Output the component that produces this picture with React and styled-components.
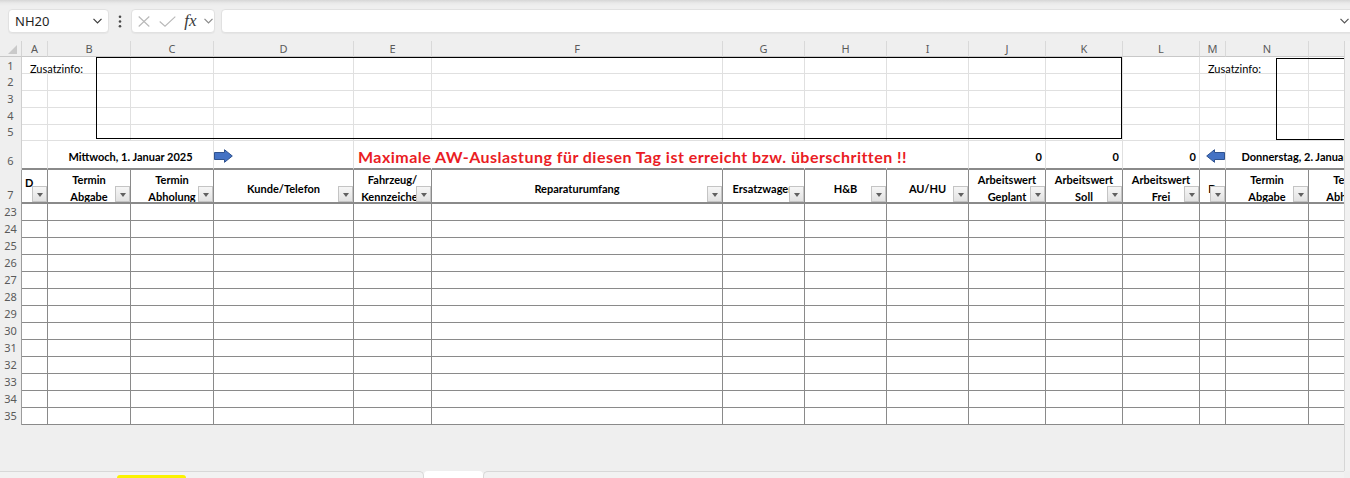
import React from 'react';
import styled, { createGlobalStyle } from 'styled-components';

const CELL_FONT = 'Lato, "Liberation Sans", Arial, sans-serif';
const UI_FONT = '"Noto Sans", "Open Sans", "Liberation Sans", sans-serif';
const GRID_LINE = '#e0e0e0';
const CELL_LINE = '#8a8a8a';

const COLUMNS = [
  ['A', 26], ['B', 83], ['C', 83], ['D', 140], ['E', 78], ['F', 291], ['G', 82],
  ['H', 82], ['I', 82], ['J', 77], ['K', 77], ['L', 77], ['M', 26], ['N', 83], ['O', 83],
];

const HEADINGS = {
  A: { lines: ['D', ''], left: true },
  B: { lines: ['Termin', 'Abgabe'] },
  C: { lines: ['Termin', 'Abholung'] },
  D: { lines: ['Kunde/Telefon'] },
  E: { lines: ['Fahrzeug/', 'Kennzeichen'] },
  F: { lines: ['Reparaturumfang'] },
  G: { lines: ['Ersatzwagen'] },
  H: { lines: ['H&B'] },
  I: { lines: ['AU/HU'] },
  J: { lines: ['Arbeitswert', 'Geplant'] },
  K: { lines: ['Arbeitswert', 'Soll'] },
  L: { lines: ['Arbeitswert', 'Frei'] },
  M: { lines: ['D'] },
  N: { lines: ['Termin', 'Abgabe'] },
  O: { lines: ['Termin', 'Abholung'] },
};

const INFO_ROWS = [1, 2, 3, 4, 5];
const DATA_ROWS = Array.from({ length: 13 }, (_, i) => 23 + i);

const GlobalStyle = createGlobalStyle`
  html, body { margin: 0; padding: 0; }
  body { background: #efefef; overflow: hidden; }
`;

const Window = styled.div`
  width: 1350px;
  height: 478px;
  display: flex;
  flex-direction: column;
  background: #efefef;
  overflow: hidden;
`;

const RibbonShade = styled.div`
  height: 9px;
  flex-shrink: 0;
  background: linear-gradient(#d6d6d6, #e9e9e9 3px, #efefef 6px);
`;

const FormulaBar = styled.div`
  display: flex;
  align-items: center;
  height: 24px;
  padding-left: 8px;
  flex-shrink: 0;
`;

const Field = styled.div`
  box-sizing: border-box;
  height: 24px;
  flex-shrink: 0;
  display: flex;
  align-items: center;
  background: #fff;
  border: 1px solid #e1e1e1;
  border-radius: 4px;
  box-shadow: 0 1px 1px rgba(0, 0, 0, 0.04);
`;

const NameBox = styled(Field)`
  width: 101px;
  justify-content: space-between;
  padding: 0 6px 0 6px;
  font: 13px ${UI_FONT};
  color: #1f1f1f;
`;

const Kebab = styled.div`
  width: 22px;
  display: flex;
  justify-content: center;
  flex-shrink: 0;
`;

const FxGroup = styled(Field)`
  width: 84px;
`;

const IconSlot = styled.span`
  width: ${p => p.$w}px;
  height: 100%;
  display: flex;
  align-items: center;
  justify-content: center;
`;

const FxLabel = styled.span`
  font: italic 17px "Liberation Serif", "DejaVu Serif", serif;
  color: #3a3a3a;
  line-height: 1;
  margin-top: -2px;
`;

const FormulaInput = styled(Field)`
  width: 1137px;
  margin-left: 6px;
  justify-content: flex-end;
  padding-right: 8px;
`;

const Workspace = styled.div`
  display: flex;
  margin-top: 8px;
  flex: 1;
  min-height: 0;
`;

const SheetColumn = styled.div`
  width: 1344px;
  flex-shrink: 0;
  display: flex;
  flex-direction: column;
`;

const GridWrap = styled.div`
  position: relative;
  width: 1344px;
  overflow: hidden;
  background: #fff;
  flex-shrink: 0;
`;

const Grid = styled.div`
  display: grid;
  width: max-content;
  grid-template-columns: 22px ${COLUMNS.map(([, w]) => `${w}px`).join(' ')};
  grid-template-rows: 16px 17px 17px 17px 17px 16px 29px 34px repeat(13, 17px);
`;

const Corner = styled.div`
  box-sizing: border-box;
  background: #efefef;
  border-right: 1px solid #d4d4d4;
  border-bottom: 1px solid #c8c8c8;
  display: flex;
  align-items: flex-end;
  justify-content: flex-end;
  padding: 0 4px 2px 0;
`;

const ColHead = styled.div`
  box-sizing: border-box;
  background: #efefef;
  border-right: 1px solid #d9d9d9;
  border-bottom: 1px solid #c8c8c8;
  display: flex;
  align-items: center;
  justify-content: center;
  font: 11px ${UI_FONT};
  line-height: 15px;
  color: #5a5a5a;
`;

const RowHead = styled.div`
  box-sizing: border-box;
  background: #efefef;
  border-right: 1px solid ${p => (p.$strong ? '#9c9c9c' : '#cfcfcf')};
  display: flex;
  align-items: flex-end;
  justify-content: center;
  padding-bottom: ${p => (p.$low ? 0 : 1)}px;
  font: 11px ${UI_FONT};
  line-height: 16px;
  color: #5a5a5a;
`;

const CellBase = styled.div`
  box-sizing: border-box;
  min-width: 0;
  display: flex;
  white-space: nowrap;
  font-family: ${CELL_FONT};
  color: #000;
`;

const InfoCell = styled(CellBase)`
  border-right: 1px solid ${p => (p.$open ? 'transparent' : GRID_LINE)};
  border-bottom: 1px solid ${GRID_LINE};
  align-items: flex-end;
  padding: 0 2px;
  font-size: 11px;
  line-height: 8px;
`;

const NoteLabel = styled.span`
  padding-left: 6px;
`;

const DayCell = styled(CellBase)`
  grid-column: span ${p => p.$span || 1};
  border-right: 1px solid ${p => (p.$open ? 'transparent' : GRID_LINE)};
  border-bottom: 2px solid ${CELL_LINE};
  align-items: center;
  justify-content: ${p =>
    p.$align === 'center' ? 'center' : p.$align === 'right' ? 'flex-end' : 'flex-start'};
  padding: 3px 3px 0;
  font-size: 11px;
  font-weight: 700;
`;

const ArrowSlot = styled(DayCell)`
  padding: 3px 0 0;
`;

const Alert = styled.span`
  font-size: 16px;
  font-weight: 700;
  letter-spacing: 0.46px;
  color: #ea1c24;
  padding-left: 1px;
`;

const HeadCell = styled(CellBase)`
  position: relative;
  flex-direction: column;
  justify-content: center;
  align-items: ${p => (p.$left ? 'flex-start' : 'center')};
  border-right: 1px solid ${CELL_LINE};
  border-bottom: 2px solid ${CELL_LINE};
  padding: 4px ${p => (p.$left ? '3px' : '0')} 0;
  font-size: 11px;
  font-weight: 700;
  line-height: 17px;
  overflow: hidden;
`;

const HeadLine = styled.span`
  display: block;
  height: 17px;
`;

const FilterButton = styled.span`
  position: absolute;
  right: 0;
  bottom: 0;
  width: 15px;
  height: 16px;
  box-sizing: border-box;
  background: linear-gradient(#f6f6f6, #e2e2e2);
  border: 1px solid #c4c4c4;
  display: flex;
  align-items: center;
  justify-content: center;

  &::after {
    content: '';
    margin-top: 2px;
    border-left: 3.5px solid transparent;
    border-right: 3.5px solid transparent;
    border-top: 4px solid #606060;
  }
`;

const EntryCell = styled(CellBase)`
  border-right: 1px solid ${CELL_LINE};
  border-bottom: 1px solid ${CELL_LINE};
`;

/* Free-floating note frames drawn on top of the sheet */
const TextFrame = styled.div`
  position: absolute;
  left: ${p => p.$x}px;
  top: ${p => p.$y}px;
  width: ${p => p.$w}px;
  height: ${p => p.$h}px;
  box-sizing: border-box;
  border: 1px solid #000;
  pointer-events: none;
`;

const Filler = styled.div`
  flex: 1;
`;

const SheetTabs = styled.div`
  display: flex;
  height: 7px;
  flex-shrink: 0;
`;

const TabRail = styled.div`
  box-sizing: border-box;
  width: ${p => (p.$w ? `${p.$w}px` : 'auto')};
  flex: ${p => (p.$w ? 'none' : 1)};
  border-top: 1px solid #d8d8d8;
  border-${p => (p.$side === 'left' ? 'right' : 'left')}: 1px solid #d8d8d8;
  border-top-${p => (p.$side === 'left' ? 'right' : 'left')}-radius: 5px;
  background: #f2f2f2;
`;

const ColouredTab = styled.div`
  margin: 3px 0 0 117px;
  width: 69px;
  height: 4px;
  border-radius: 3px 3px 0 0;
  background: #fbf200;
`;

const ActiveTab = styled.div`
  width: 59px;
  background: #fff;
  border-radius: 4px 4px 0 0;
`;

const ScrollEdge = styled.div`
  flex: 1;
  height: 430px;
  border-left: 1px solid #d6d6d6;
  background: #f1f1f1;
`;

const Chevron = ({ color = '#555', w = 9 }) => (
  <svg width={w} height="6" viewBox="0 0 9 6">
    <path d="M0.5 0.8L4.5 4.8L8.5 0.8" fill="none" stroke={color} strokeWidth="1.2" />
  </svg>
);

const BlockArrow = ({ flip }) => (
  <svg width="19" height="14" viewBox="0 0 19 14" style={flip ? { transform: 'scaleX(-1)' } : undefined}>
    <path
      d="M0.5 3.5H10.5V0.7L18.3 7L10.5 13.3V10.5H0.5Z"
      fill="#4472c4"
      stroke="#2f528f"
      strokeWidth="1"
    />
  </svg>
);

function InfoRow({ row }) {
  return (
    <>
      <RowHead $low={row === 1}>{row}</RowHead>
      {COLUMNS.map(([id]) => {
        const labelled = row === 1 && (id === 'A' || id === 'M');
        return (
          <InfoCell key={id} $open={labelled}>
            {labelled && <NoteLabel>Zusatzinfo:</NoteLabel>}
          </InfoCell>
        );
      })}
    </>
  );
}

function DayRow() {
  return (
    <>
      <RowHead>6</RowHead>
      <DayCell />
      <DayCell $span={2} $align="center">Mittwoch, 1. Januar 2025</DayCell>
      <ArrowSlot><BlockArrow /></ArrowSlot>
      <DayCell $open>
        <Alert>Maximale AW-Auslastung für diesen Tag ist erreicht bzw. überschritten !!</Alert>
      </DayCell>
      <DayCell $open />
      <DayCell $open />
      <DayCell $open />
      <DayCell />
      <DayCell $align="right">0</DayCell>
      <DayCell $align="right">0</DayCell>
      <DayCell $align="right">0</DayCell>
      <ArrowSlot $align="right"><BlockArrow flip /></ArrowSlot>
      <DayCell $span={2} $align="center">Donnerstag, 2. Januar 2025</DayCell>
    </>
  );
}

function HeadingRow() {
  return (
    <>
      <RowHead $strong>7</RowHead>
      {COLUMNS.map(([id]) => {
        const h = HEADINGS[id];
        return (
          <HeadCell key={id} $left={h.left}>
            {h.lines.map((line, i) => (
              <HeadLine key={i}>{line}</HeadLine>
            ))}
            <FilterButton />
          </HeadCell>
        );
      })}
    </>
  );
}

function EntryRow({ row }) {
  return (
    <>
      <RowHead $strong>{row}</RowHead>
      {COLUMNS.map(([id]) => (
        <EntryCell key={id} />
      ))}
    </>
  );
}

export default function App() {
  return (
    <>
      <GlobalStyle />
      <Window>
        <RibbonShade />
        <FormulaBar>
          <NameBox>
            <span>NH20</span>
            <Chevron color="#3c3c3c" />
          </NameBox>
          <Kebab>
            <svg width="4" height="13" viewBox="0 0 4 13">
              <circle cx="2" cy="1.7" r="1.3" fill="#4a4a4a" />
              <circle cx="2" cy="6.5" r="1.3" fill="#4a4a4a" />
              <circle cx="2" cy="11.3" r="1.3" fill="#4a4a4a" />
            </svg>
          </Kebab>
          <FxGroup>
            <IconSlot $w={23}>
              <svg width="12" height="11" viewBox="0 0 12 11">
                <path d="M0.7 0.5L11.3 10.5M11.3 0.5L0.7 10.5" stroke="#b8b8b8" strokeWidth="1.1" />
              </svg>
            </IconSlot>
            <IconSlot $w={24}>
              <svg width="17" height="11" viewBox="0 0 17 11">
                <path d="M0.7 5.5L6 10.2L16.3 0.6" fill="none" stroke="#b8b8b8" strokeWidth="1.1" />
              </svg>
            </IconSlot>
            <IconSlot $w={23}>
              <FxLabel>fx</FxLabel>
            </IconSlot>
            <IconSlot $w={12}>
              <Chevron color="#8a8a8a" />
            </IconSlot>
          </FxGroup>
          <FormulaInput>
            <Chevron color="#555" />
          </FormulaInput>
        </FormulaBar>

        <Workspace>
          <SheetColumn>
            <GridWrap>
              <Grid>
                <Corner>
                  <svg width="9" height="9" viewBox="0 0 9 9">
                    <path d="M9 0V9H0Z" fill="#c9c9c9" />
                  </svg>
                </Corner>
                {COLUMNS.map(([id]) => (
                  <ColHead key={id}>{id}</ColHead>
                ))}
                {INFO_ROWS.map(r => (
                  <InfoRow key={r} row={r} />
                ))}
                <DayRow />
                <HeadingRow />
                {DATA_ROWS.map(r => (
                  <EntryRow key={r} row={r} />
                ))}
              </Grid>
              <TextFrame $x={96} $y={16} $w={1026} $h={82} />
              <TextFrame $x={1276} $y={17} $w={120} $h={82} />
            </GridWrap>
            <Filler />
            <SheetTabs>
              <TabRail $w={424} $side="left">
                <ColouredTab />
              </TabRail>
              <ActiveTab />
              <TabRail $side="right" />
            </SheetTabs>
          </SheetColumn>
          <ScrollEdge />
        </Workspace>
      </Window>
    </>
  );
}
